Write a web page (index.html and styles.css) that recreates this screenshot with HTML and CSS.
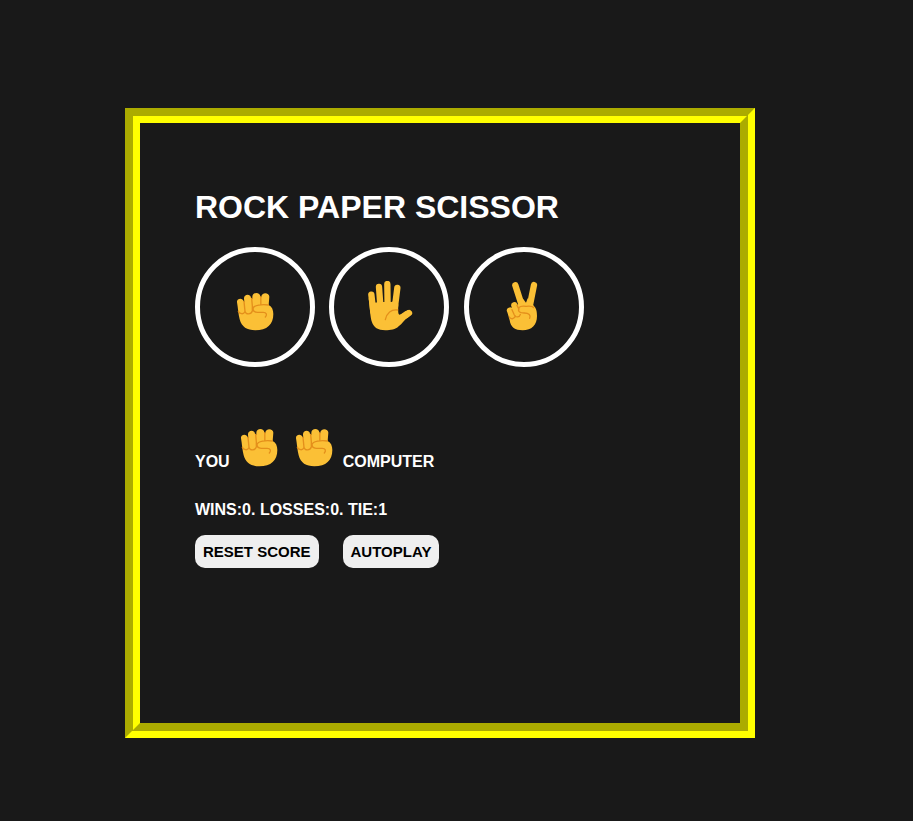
FILE: index.html
```html
<!DOCTYPE html>
<html lang="en">
<head>
<meta charset="utf-8">
<meta name="viewport" content="width=device-width, initial-scale=1">
<title>Rock Paper Scissor</title>
<link rel="stylesheet" href="styles.css">
</head>
<body>
<svg class="sprite" aria-hidden="true">
  <symbol id="rock" viewBox="12 3 156 156">
    <path class="skin" d="M36 67C34 54 54 52 56 64L58 66L57 56C56 42 76 40 78 53L82 57V50C82 35 106 35 106 50L109 52V50C109 36 133 36 133 50L131 75C141 80 145 90 145 102C145 133 126 151 91 151C66 151 50 141 44 118C40 103 39 84 36 67Z"/>
    <path class="crease" d="M40 94C43 102 56 104 59 96M57 64L60 94C63 105 78 104 82 93M80 55L82 78V93M107.500 50V74M130 75C114 73 84 74 84 87C84 98 97 98 115 97C124 97 127 104 121 111"/>
  </symbol>
  <symbol id="paper" viewBox="39 33 156 156">
    <path class="finger" d="M64 74L70 125M87 51L92 120M112 42L113 120M142 54L133 125M177 129L167 136"/>
    <path class="skin" d="M56 85L72 98L92 96H124L140 90L145 104C144 122 144 134 149 134C156 132 161 125 174 120C190 124 186 132 176 140C162 150 157 161 146 169C136 179 122 181 106 181C84 181 71 172 66 157C60 139 60 113 56 85Z"/>
    <path class="crease" d="M106 149C110 129 124 117 143 120"/>
  </symbol>
  <symbol id="scissors" viewBox="24 33 156 156">
    <path class="finger" d="M76 46L98 115M132 45L118 115M73 106L81 130M60 122L68 138"/>
    <path class="skin" d="M65 117L82 104L91 100L98 85L108 98L113 85L122 95L130 106C139 115 141 124 141 138C141 165 125 181 98 181C75 181 62 172 59 151L53 129Z"/>
    <path class="crease" d="M58 141C62 149 73 148 76 138M66 119L73 135C78 144 89 142 91 133M81 106L86 116M86 113C91 108 101 108 108 109C118 108 127 107 131 113M87 116C82 125 91 129 103 129C117 129 123 136 119 145"/>
  </symbol>
</svg>
<main class="game">
  <h1 class="title">ROCK PAPER SCISSOR</h1>
  <div class="moves">
    <button class="move" type="button" aria-label="Rock"><svg class="hand"><use href="#rock"/></svg></button>
    <button class="move" type="button" aria-label="Paper"><svg class="hand"><use href="#paper"/></svg></button>
    <button class="move" type="button" aria-label="Scissors"><svg class="hand"><use href="#scissors"/></svg></button>
  </div>
  <p class="result">
    <span>YOU</span>
    <svg class="hand" role="img" aria-label="Rock"><use href="#rock"/></svg>
    <svg class="hand" role="img" aria-label="Rock"><use href="#rock"/></svg>
    <span>COMPUTER</span>
  </p>
  <p class="score">WINS:0. LOSSES:0. TIE:1</p>
  <div class="actions">
    <button class="action" type="button">RESET SCORE</button>
    <button class="action" type="button">AUTOPLAY</button>
  </div>
</main>
</body>
</html>
```
FILE: styles.css
```css
* {
  box-sizing: border-box;
}

body {
  margin: 0;
  padding: 108px 158px 83px 125px;
  background: #191919;
  color: #fff;
  font: bold 16px/18px "Liberation Sans", Arial, sans-serif;
}

.sprite {
  position: absolute;
  width: 0;
  height: 0;
}

.game {
  padding: 66px 55px 155px;
  border: 15px groove yellow;
}

.title {
  margin: 0 0 22px;
  font-size: 32px;
  line-height: 36px;
}

.move {
  display: inline-flex;
  align-items: center;
  justify-content: center;
  width: 120px;
  height: 120px;
  margin-right: 10px;
  padding: 0;
  border: 5px solid #fff;
  border-radius: 50%;
  background: transparent;
  vertical-align: top;
  cursor: pointer;
}

.move:last-child {
  margin-right: 0;
}

.hand {
  display: block;
  width: 52px;
  height: 52px;
}

.skin {
  fill: #fbc036;
}

.finger {
  fill: none;
  stroke: #fbc036;
  stroke-width: 19;
  stroke-linecap: round;
}

.crease {
  fill: none;
  stroke: #e48f1b;
  stroke-width: 4;
  stroke-linecap: round;
  stroke-linejoin: round;
}

.result {
  display: flex;
  align-items: flex-end;
  gap: 3px;
  margin: 50px 0 32px;
  line-height: 14px;
}

.score {
  margin: 0 0 16px;
}

.actions {
  display: flex;
  flex-wrap: wrap;
  gap: 24px;
}

.action {
  padding: 8px;
  border: 0;
  border-radius: 10px;
  background: #efefef;
  color: #000;
  font: bold 15px/17px "Liberation Sans", Arial, sans-serif;
  cursor: pointer;
}
```
